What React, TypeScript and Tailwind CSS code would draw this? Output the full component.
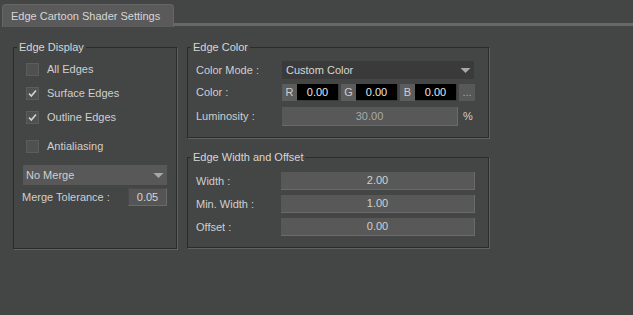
import React from "react";

function Check({ checked, label }: { checked?: boolean; label: string }) {
  return (
    <div className="flex items-center h-[13px]">
      <div className="w-[13px] h-[13px] bg-[#505050] border border-[#5c5c5c] flex items-center justify-center">
        {checked && (
          <svg width="11" height="11" viewBox="0 0 11 11">
            <path d="M2 5.5 L4.3 8 L9 2.5" stroke="#d4d4d4" strokeWidth="1.6" fill="none" />
          </svg>
        )}
      </div>
      <span className="ml-[8px] text-[#cfcfcf]">{label}</span>
    </div>
  );
}

function Arrow() {
  return (
    <svg width="11" height="7" viewBox="0 0 11 7" className="mr-[3px]">
      <path d="M0.5 1 L10.5 1 L5.5 6 Z" fill="#a8a8a8" />
    </svg>
  );
}

function Field({ value }: { value: string }) {
  return (
    <div className="w-[194px] h-[18px] bg-[#585858] border-b border-r border-[#6a6a6a] flex items-center justify-center text-[#d0d0d0]">
      {value}
    </div>
  );
}

function Channel({ ch, value }: { ch: string; value: string }) {
  return (
    <div className="flex h-[17px] mr-[2px]">
      <div className="w-[15px] bg-[#5c5c5c] flex items-center justify-center text-[#cfcfcf]">{ch}</div>
      <div className="w-[42px] bg-black border-r border-b border-[#3a3a3a] flex items-center justify-center text-[#e8e8e8]">
        {value}
      </div>
    </div>
  );
}

export default function App() {
  return (
    <div
      className="w-[633px] h-[315px] bg-[#444545] text-[11px] leading-[13px] text-[#cfcfcf] overflow-hidden"
      style={{ fontFamily: '"Liberation Sans", Arial, sans-serif' }}
    >
      {/* tab strip */}
      <div className="flex items-end h-[27px] pt-[4px] pl-[2px]">
        <div className="w-[172px] h-[23px] bg-[#5a5a5a] rounded-t-[4px] border border-b-0 border-[#666] pl-[8px] pt-[5px] text-[#d6d6d6]">
          Edge Cartoon Shader Settings
        </div>
        <div className="flex-1 h-[3px] mb-[1px] bg-[#686868]" />
      </div>

      <div className="flex pl-[13px] pt-[14px]">
        {/* Edge Display */}
        <fieldset className="w-[164px] h-[208px] border border-[#2b2b2b] shadow-[1px_1px_0_#616161] pl-[12px] pr-[9px]">
          <legend className="ml-[-9px] px-[2px] text-[#d6d6d6]">Edge Display</legend>
          <div className="flex flex-col gap-[11px] mt-[9px]">
            <Check label="All Edges" />
            <Check checked label="Surface Edges" />
            <Check checked label="Outline Edges" />
            <div className="mt-[5px]">
              <Check label="Antialiasing" />
            </div>
          </div>
          <div className="ml-[-3px] mt-[12px] h-[20px] bg-[#585858] flex items-center justify-between pl-[3px] text-[#cfcfcf]">
            No Merge
            <Arrow />
          </div>
          <div className="ml-[-4px] mt-[3px] flex items-center justify-between">
            <span className="mt-[1px]">Merge Tolerance :</span>
            <div className="w-[39px] h-[18px] bg-[#555] border border-[#6a6a6a] border-t-[#4a4a4a] border-l-[#4a4a4a] flex items-center justify-center text-[#d6d6d6]">
              0.05
            </div>
          </div>
        </fieldset>

        <div className="ml-[10px] flex flex-col">
          {/* Edge Color */}
          <fieldset className="w-[302px] h-[97px] border border-[#2b2b2b] shadow-[1px_1px_0_#616161] pl-[8px]">
            <legend className="ml-[-5px] px-[2px] text-[#d6d6d6]">Edge Color</legend>
            <div className="flex items-center mt-[7px] h-[18px]">
              <span className="w-[86px]">Color Mode :</span>
              <div className="w-[192px] h-[18px] bg-[#3a3a3a] flex items-center justify-between pl-[4px] text-[#d6d6d6]">
                Custom Color
                <Arrow />
              </div>
            </div>
            <div className="flex items-center mt-[5px] h-[17px]">
              <span className="w-[86px]">Color :</span>
              <Channel ch="R" value="0.00" />
              <Channel ch="G" value="0.00" />
              <Channel ch="B" value="0.00" />
              <div className="w-[16px] h-[17px] bg-[#585858] flex items-end justify-center pb-[2px] text-[#aaa]">...</div>
            </div>
            <div className="flex items-center mt-[6px] h-[19px]">
              <span className="w-[86px]">Luminosity :</span>
              <div className="w-[176px] h-[19px] bg-[#585858] border-b border-r border-[#6a6a6a] flex items-center justify-center text-[#a8a8a8]">
                30.00
              </div>
              <span className="ml-[5px]">%</span>
            </div>
          </fieldset>

          {/* Edge Width and Offset */}
          <fieldset className="mt-[13px] w-[302px] h-[97px] border border-[#2b2b2b] shadow-[1px_1px_0_#616161] pl-[8px]">
            <legend className="ml-[-5px] px-[2px] text-[#d6d6d6]">Edge Width and Offset</legend>
            <div className="flex flex-col gap-[5px] mt-[8px]">
              <div className="flex items-center">
                <span className="w-[85px]">Width :</span>
                <Field value="2.00" />
              </div>
              <div className="flex items-center">
                <span className="w-[85px]">Min. Width :</span>
                <Field value="1.00" />
              </div>
              <div className="flex items-center">
                <span className="w-[85px]">Offset :</span>
                <Field value="0.00" />
              </div>
            </div>
          </fieldset>
        </div>
      </div>
    </div>
  );
}
